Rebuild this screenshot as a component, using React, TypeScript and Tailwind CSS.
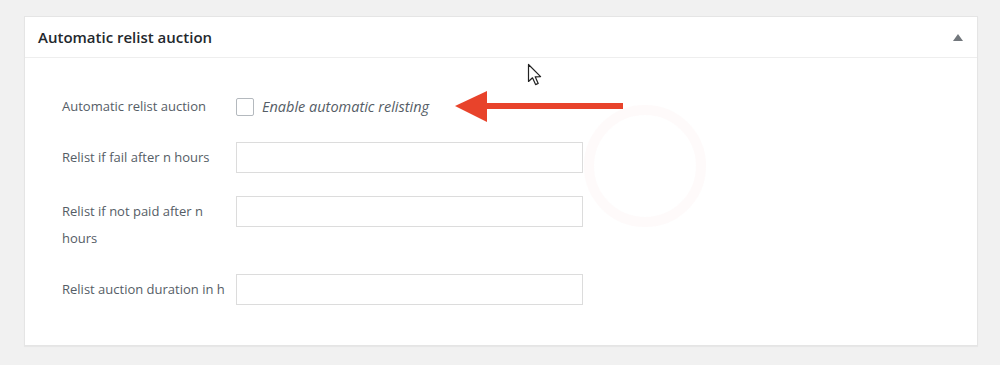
import React from 'react';

const font = { fontFamily: '"Open Sans", "Noto Sans", sans-serif' };

const Cursor = () => (
  <svg width="16" height="24" viewBox="0 0 16 24" className="absolute left-[527px] top-[63px]">
    <path
      d="M1.5 1.5 L1.5 18.5 L5.5 14.8 L8.6 21.6 L11.2 20.4 L8.2 13.8 L13.6 13.6 Z"
      fill="#fff"
      stroke="#222"
      strokeWidth="1.2"
      strokeLinejoin="round"
    />
  </svg>
);

const RedArrow = () => (
  <svg width="172" height="34" viewBox="0 0 172 34" className="absolute left-[453px] top-[89px]">
    <rect x="32" y="14" width="138" height="6" fill="#e8432b" />
    <polygon points="2,17 34,2 34,33" fill="#e8432b" />
  </svg>
);

const Field = ({ label, two }: { label: string; two?: boolean }) => (
  <div className="flex items-start">
    <div
      className={
        two
          ? 'w-[174px] pt-[2px] pr-3 text-[13px] leading-[27px] text-[#555d66]'
          : 'w-[174px] text-[13px] leading-[31px] text-[#555d66] whitespace-nowrap'
      }
    >
      {label}
    </div>
    <input
      type="text"
      className="w-[347px] h-[31px] border border-[#dcdcdc] bg-white outline-none"
    />
  </div>
);

export default function App() {
  return (
    <div className="w-[1000px] h-[365px] bg-[#f1f1f1] pt-4 pl-6 relative" style={font}>
      <div className="w-[954px] bg-white border border-[#e5e5e5] shadow-[0_1px_1px_rgba(0,0,0,0.04)] h-[330px]">
        <div className="h-[41px] flex items-center justify-between pl-[13px] pr-[14px] border-b border-[#eeeeee]">
          <h2 className="text-[15px] font-semibold text-[#23282d]">Automatic relist auction</h2>
          <svg width="10" height="7" viewBox="0 0 10 7">
            <polygon points="5,0 10,7 0,7" fill="#72777c" />
          </svg>
        </div>
        <div className="pl-[37px] pt-[39px]">
          <div className="flex items-center h-[20px]">
            <div className="w-[174px] text-[13px] text-[#555d66] whitespace-nowrap">Automatic relist auction</div>
            <span className="w-[18px] h-[18px] border border-[#b4b9be] rounded-[2px] bg-white" />
            <span className="ml-2 text-[14.5px] italic text-[#555d66]">Enable automatic relisting</span>
          </div>
          <div className="mt-[25px]">
            <Field label="Relist if fail after n hours" />
          </div>
          <div className="mt-[23px]">
            <Field label="Relist if not paid after n hours" two />
          </div>
          <div className="mt-[22px]">
            <Field label="Relist auction duration in h" />
          </div>
        </div>
      </div>
      <div className="absolute left-[584px] top-[105px] w-[122px] h-[122px] rounded-full border-[10px] border-[#fdf6f6] opacity-50" />
      <RedArrow />
      <Cursor />
    </div>
  );
}
